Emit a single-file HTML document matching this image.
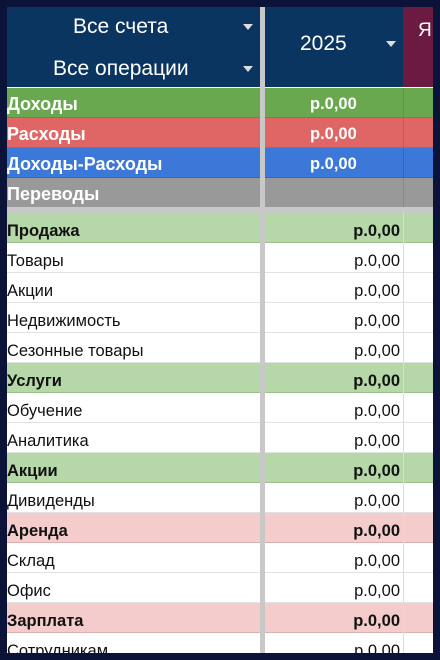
<html><head><style>
body{margin:0;width:440px;height:660px;background:#0b1339;overflow:hidden;font-family:"Liberation Sans",sans-serif}
#c{position:absolute;left:7px;top:7px;width:426px;height:646px;overflow:hidden;background:#fff}
.hd{position:absolute;top:0;height:80px;background:#0b3561}
.t{position:absolute;color:#fff;font-size:21px}
.tri{position:absolute;width:0;height:0;border-left:5px solid transparent;border-right:5px solid transparent;border-top:6px solid #ddd}
.r{position:absolute;left:0;width:426px;height:30px;box-sizing:border-box;border-bottom:1px solid #e2e2e2;font-size:16.5px;color:#111}
.r .a{position:absolute;left:0;top:9px}
.r .v{position:absolute;right:33px;top:9px}
.r .s{position:absolute;left:253px;top:0;width:5px;height:30px;background:#c8c8c8}
.r .e{position:absolute;left:396px;top:0;width:1px;height:30px;background:#dcdcdc}
.b{font-weight:bold}
.m .a,.m .v{color:#fff;font-weight:bold;font-size:18px;top:6px}
.m .v{right:auto;left:303px;font-size:16.5px;top:7px}
</style></head><body><div id="c">
<div class="hd" style="left:0;width:253px"></div>
<div class="hd" style="left:258px;width:138px"></div>
<div class="hd" style="left:396px;width:30px;background:#6b1b42"></div>
<div style="position:absolute;left:253px;top:0;width:5px;height:646px;background:#c8c8c8"></div>
<div class="t" style="left:66px;top:8px">Все счета</div>
<div class="tri" style="left:236px;top:17px"></div>
<div class="t" style="left:46px;top:50px">Все операции</div>
<div class="tri" style="left:236px;top:59px"></div>
<div class="t" style="left:293px;top:25px">2025</div>
<div class="tri" style="left:379px;top:34px"></div>
<div class="t" style="left:411px;top:13px;font-size:19px">Я</div>

<div class="r m" style="top:81px;background:#6aa84f;border-color:#5a9040"><span class="a">Доходы</span><span class="v">р.0,00</span><span class="s"></span><span class="e" style="background:#5a9a45"></span></div>
<div class="r m" style="top:111px;background:#e06666;border-color:#c85858"><span class="a">Расходы</span><span class="v">р.0,00</span><span class="s"></span><span class="e" style="background:#c85858"></span></div>
<div class="r m" style="top:141px;background:#3c78d8;border-color:#3468c0"><span class="a">Доходы-Расходы</span><span class="v">р.0,00</span><span class="s"></span><span class="e" style="background:#3468c0"></span></div>
<div class="r m" style="top:171px;background:#999;border-color:#888"><span class="a">Переводы</span><span class="s"></span><span class="e" style="background:#888"></span></div>
<div style="position:absolute;left:0;top:200px;width:426px;height:6px;background:#c8c8c8"></div>

<div class="r b" style="top:206px;background:#b6d7a8;border-color:#9cc08c"><span class="a">Продажа</span><span class="v">р.0,00</span><span class="s"></span><span class="e"></span></div>
<div class="r" style="top:236px"><span class="a">Товары</span><span class="v">р.0,00</span><span class="s"></span><span class="e"></span></div>
<div class="r" style="top:266px"><span class="a">Акции</span><span class="v">р.0,00</span><span class="s"></span><span class="e"></span></div>
<div class="r" style="top:296px"><span class="a">Недвижимость</span><span class="v">р.0,00</span><span class="s"></span><span class="e"></span></div>
<div class="r" style="top:326px"><span class="a">Сезонные товары</span><span class="v">р.0,00</span><span class="s"></span><span class="e"></span></div>
<div class="r b" style="top:356px;background:#b6d7a8;border-color:#9cc08c"><span class="a">Услуги</span><span class="v">р.0,00</span><span class="s"></span><span class="e"></span></div>
<div class="r" style="top:386px"><span class="a">Обучение</span><span class="v">р.0,00</span><span class="s"></span><span class="e"></span></div>
<div class="r" style="top:416px"><span class="a">Аналитика</span><span class="v">р.0,00</span><span class="s"></span><span class="e"></span></div>
<div class="r b" style="top:446px;background:#b6d7a8;border-color:#9cc08c"><span class="a">Акции</span><span class="v">р.0,00</span><span class="s"></span><span class="e"></span></div>
<div class="r" style="top:476px"><span class="a">Дивиденды</span><span class="v">р.0,00</span><span class="s"></span><span class="e"></span></div>
<div class="r b" style="top:506px;background:#f4cccc;border-color:#dcb0b0"><span class="a">Аренда</span><span class="v">р.0,00</span><span class="s"></span><span class="e"></span></div>
<div class="r" style="top:536px"><span class="a">Склад</span><span class="v">р.0,00</span><span class="s"></span><span class="e"></span></div>
<div class="r" style="top:566px"><span class="a">Офис</span><span class="v">р.0,00</span><span class="s"></span><span class="e"></span></div>
<div class="r b" style="top:596px;background:#f4cccc;border-color:#dcb0b0"><span class="a">Зарплата</span><span class="v">р.0,00</span><span class="s"></span><span class="e"></span></div>
<div class="r" style="top:626px"><span class="a">Сотрудникам</span><span class="v">р.0,00</span><span class="s"></span><span class="e"></span></div>
</div></body></html>
